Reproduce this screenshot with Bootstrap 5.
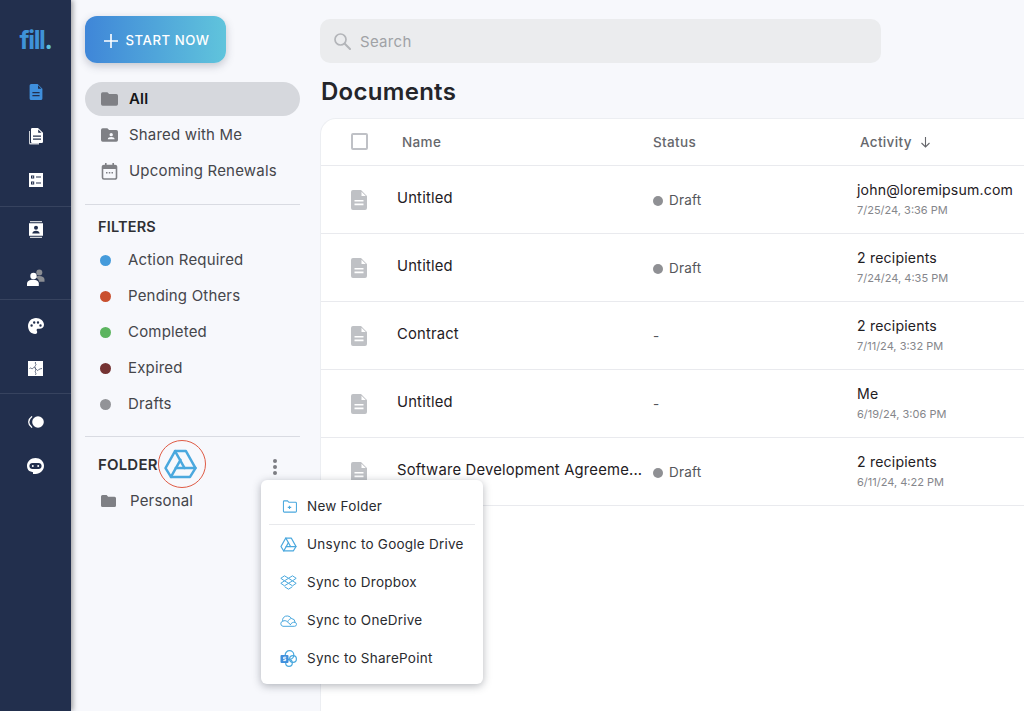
<!doctype html>
<html lang="en">
<head>
<meta charset="utf-8">
<title>Documents</title>
<link rel="stylesheet" href="https://cdn.jsdelivr.net/npm/bootstrap@5.3.0/dist/css/bootstrap.min.css">
<style>
html,body{height:711px;overflow:hidden}
body{font-family:"Inter","Liberation Sans",sans-serif;font-size:15px;background:#f7f8fc;color:#3a3b3f;letter-spacing:.012em}
.shell{height:711px}
.rail{width:71px;flex:none;background:#222f4d;box-shadow:2px 0 5px rgba(0,0,0,.35);z-index:3;padding-top:26px}
.rail-logo{height:28px;line-height:28px;font-size:25px;font-weight:700;color:#3f93d8;text-align:center;letter-spacing:-.055em;margin-bottom:16px}
.rail-group{border-bottom:1px solid #37435f}
.rail-group.one{padding-bottom:4px}
.rail-group.three{padding-top:4px;padding-bottom:3px}
.rail-group.three .rail-btn{height:43px}
.rail-group.last{border:0;padding-top:6px}
.rail-btn{height:44px;display:flex;align-items:center;justify-content:center}
.panel{width:249px;flex:none;padding:16px 20px 0 14px;position:relative}
.start-btn{width:141px;height:47px;border-radius:12px;border:0;background:linear-gradient(90deg,#3f86d8,#60c4dc);color:#fff;font-size:13.2px;font-weight:500;letter-spacing:.04em;box-shadow:0 3px 9px rgba(60,70,90,.28);margin-bottom:19px;padding:2px 0 0 2px}
.side-row{height:36px;padding-left:16px;display:flex;align-items:center;color:#45464b;gap:11px}
.side-row svg{flex:none}
.side-row.on{height:34px;margin-bottom:1px;background:#d6d8dd;border-radius:17px;font-weight:600;color:#141518}
.side-rule{border-top:1px solid #d9dbe2;margin:0;opacity:1}
.side-title{font-weight:600;color:#2f3034;font-size:14.5px;padding-left:13px}
.dot-mark{width:11px;height:11px;border-radius:50%;flex:none;display:block}
.filter-row{padding-left:15px;gap:17px}
.folder-head{height:56px;position:relative;display:flex;align-items:center}
.folder-head .side-title{font-size:15px}
.drive-ring{position:absolute;left:73px;top:3px;width:48px;height:48px;border:1px solid #df5b45;border-radius:50%;display:flex;align-items:center;justify-content:center;padding-right:3px}
.kebab{position:absolute;left:188px;top:22px;width:5px;display:flex;flex-direction:column;gap:2px}
.kebab i{display:block;width:4px;height:4px;border-radius:50%;background:#7d7e83}
.menu-box{position:absolute;left:190px;top:480px;width:222px;height:204px;padding:7px 0 0;border:0;border-radius:6px;background:#fff;box-shadow:0 2px 8px rgba(40,45,60,.35);z-index:5;display:block;--bs-dropdown-min-width:0}
.menu-box .dropdown-item{height:38px;display:flex;align-items:center;gap:10px;padding:0 0 0 19px;font-size:13.5px;color:#2a2b2f;letter-spacing:.018em}
.menu-box .dropdown-divider{margin:0 8px 0;border-color:#e8e9ec;height:0}
.menu-box .top-item{height:37px;padding-top:1px}
.work{flex:1;min-width:0;overflow:hidden}
.search-box{margin:19px 0 0;width:561px;height:44px;background:#ebecee;border-radius:10px;display:flex;align-items:center;gap:9px;padding-left:14px;color:#a0a2a6;font-size:15px}
.search-word{padding-top:2px;letter-spacing:.02em}
.page-title{font-size:24px;font-weight:600;color:#24252a;line-height:28px;margin:15px 0 12px 1px;letter-spacing:.012em}
.doc-card{background:#fff;border-top:1px solid #eceef2;border-left:1px solid #eceef2;border-top-left-radius:16px;height:600px;width:760px}
.doc-table{table-layout:fixed;width:759px;margin:0;--bs-table-bg:transparent;border-collapse:collapse}
.doc-table td,.doc-table th{padding:0;vertical-align:middle;border-bottom:1px solid #e9eaee;white-space:nowrap}
.doc-table th{height:46px;font-size:13.5px;font-weight:500;color:#66676c;letter-spacing:.025em}
.doc-table td{height:68px;color:#1f2024;font-size:14.8px}
.doc-table .col-check{padding-left:30px}
.doc-table .col-name{padding-left:5px}
.doc-table .col-act{padding-left:3px}
.doc-table .name-cell{padding-bottom:2px}
.check-box{width:17px;height:17px;border:2px solid #bfc1c6;border-radius:2px;display:block}
.cell-icon{display:block;position:relative;top:1px}
.status-cell{display:flex;align-items:center;gap:6px;font-size:13.5px;color:#55565b;padding-top:3px}
.status-cell .dot-mark{width:10px;height:10px;background:#8f9094}
.who{font-size:14.1px;line-height:17px;color:#1f2024;margin-bottom:5px;margin-top:-1px}
.when{font-size:11px;line-height:14px;color:#85868b;letter-spacing:0}
</style>
</head>
<body>
<svg width="0" height="0" class="position-absolute">
  <symbol id="doc" viewBox="0 0 16 20"><path fill="currentColor" fill-rule="evenodd" d="M2 0h8l6 6v12a2 2 0 0 1-2 2H2a2 2 0 0 1-2-2V2a2 2 0 0 1 2-2zm8.500 1.700V6h4.300zM3.500 10v1.600h9V10zm0 3.600v1.600h9v-1.600z"/></symbol>
  <symbol id="folder" viewBox="0 0 20 16"><path fill="currentColor" d="M2 0h5.500l2 2.200H18a2 2 0 0 1 2 2V14a2 2 0 0 1-2 2H2a2 2 0 0 1-2-2V2a2 2 0 0 1 2-2z"/></symbol>
  <symbol id="drive" viewBox="0 0 24 22"><g fill="none" stroke="currentColor" stroke-width="1.800" stroke-linejoin="round" stroke-linecap="round"><path d="M8 1.500h8L23 14l-4 6.500H5L1 14z"/><path d="M8 1.500 15 14h8"/><path d="M5 20.500 12 8"/><path d="M8.500 14H15"/></g></symbol>
</svg>
<div class="shell d-flex">
  <nav class="rail">
    <div class="rail-logo">fill<span style="color:#5cc0de">.</span></div>
    <div class="rail-group one">
      <div class="rail-btn"><svg width="14" height="16" style="color:#3f8fdc"><use href="#doc"/></svg></div>
      <div class="rail-btn"><svg width="16" height="17" viewBox="0 0 16 17"><path fill="#cfd2d8" d="M1 3h1v12h9v1.400H2.200A1.200 1.200 0 0 1 1 15.200z"/><path fill="#fff" fill-rule="evenodd" d="M4.200 0H10l5 4.800v9a1.200 1.200 0 0 1-1.200 1.200H4.200A1.200 1.200 0 0 1 3 13.800V1.200A1.200 1.200 0 0 1 4.200 0zm6 1.500v3.200h3.300zM5 7.500v1.200h8V7.500zm0 3v1.200h8v-1.200z"/></svg></div>
      <div class="rail-btn"><svg width="14" height="14" viewBox="0 0 14 14"><path fill="#fff" fill-rule="evenodd" d="M0 0h14v14H0zm2 2.400v3.200h3.200V2.400zm1 1h1.200v1.200H3zM7 3.400v1.200h5V3.400zM2 8.400v3.200h3.200V8.400zm1 1h1.200v1.200H3zm4 0v1.200h5V9.400z"/></svg></div>
    </div>
    <div class="rail-group">
      <div class="rail-btn"><svg width="14" height="17" viewBox="0 0 14 17"><path fill="#cfd2d8" d="M1 0h12v1.300H1zM1 15.700h12V17H1z"/><path fill="#fff" fill-rule="evenodd" d="M0 2.200h14v12.600H0zM7 4.800a2 2 0 1 0 0 4 2 2 0 0 0 0-4zM3.300 12.600h7.400c0-1.700-1.600-2.800-3.700-2.800s-3.700 1.100-3.700 2.800z"/></svg></div>
      <div class="rail-btn mt-1"><svg width="18" height="17" viewBox="0 0 18 17"><circle cx="12.300" cy="3.600" r="3" fill="#8a8d93"/><path fill="#8a8d93" d="M8 8.200c1-1 2.800-1.300 4.300-1.300 3 0 5.200 1.400 5.200 3.600v2.200H12c0-2-1.400-3.600-4-4.500z"/><circle cx="6.500" cy="7" r="3.200" fill="#fff"/><path fill="#fff" d="M0 17v-2.600c0-2.200 2.700-3.700 6-3.700s5.800 1.500 5.800 3.700V17z"/></svg></div>
    </div>
    <div class="rail-group three">
      <div class="rail-btn"><svg width="16" height="16" viewBox="0 0 16 16"><path fill="#fff" fill-rule="evenodd" d="M8 0c4.500 0 8 3 8 6.800 0 2.700-2.100 3.900-4.400 3.900H10c-.9 0-1.400.6-1.400 1.300 0 .8.6 1 .6 2 0 1.200-.7 2-2 2C3 16 0 12.400 0 8c0-4.400 3.500-8 8-8zM3.600 6.300a1.200 1.200 0 1 0 0 2.400 1.200 1.200 0 0 0 0-2.400zm2.600-3a1.200 1.200 0 1 0 0 2.400 1.200 1.200 0 0 0 0-2.400zm3.800 0a1.200 1.200 0 1 0 0 2.400 1.200 1.200 0 0 0 0-2.400zm2.500 3a1.200 1.200 0 1 0 0 2.400 1.200 1.200 0 0 0 0-2.400z"/></svg></div>
      <div class="rail-btn"><svg width="15" height="15" viewBox="0 0 15 15"><rect width="15" height="15" fill="#fff"/><path fill="none" stroke="#3d4964" stroke-width=".8" d="M1.500 7.500c1.500-1.500 2 1 3.200 0s1-1.800 2.800 0c1.500 1.500 2 2.800 3 1.500s1.500-1 3.500-1.500M7.500 1c-1 2 1.500 2 0 3.500s0 1.500 0 3M7.500 7.500c1 2-1 2.500 0 4s0 1.500 0 2.500"/></svg></div>
    </div>
    <div class="rail-group last">
      <div class="rail-btn"><svg width="16" height="12" viewBox="0 0 16 12"><circle cx="10" cy="6" r="5.800" fill="#fff"/><path fill="none" stroke="#fff" stroke-width="1.300" stroke-linecap="round" d="M3.700 .8C1.800 2.200.7 4 .7 6s1.100 3.800 3 5.200"/></svg></div>
      <div class="rail-btn"><svg width="17" height="16" viewBox="0 0 17 16"><path fill="#fff" fill-rule="evenodd" d="M8.500 0c4.700 0 8.500 3.400 8.500 7.800 0 4.500-3.700 8.200-8.500 8.200H6v-1.800l-3.800-1.100C.8 11.700 0 9.900 0 7.800 0 3.400 3.800 0 8.500 0zM5.500 5C3.700 5 2.400 6.200 2.400 8s1.300 3 3.100 3h6c1.800 0 3.100-1.200 3.100-3s-1.300-3-3.100-3zm.3 2.100a1 1 0 1 1 0 2 1 1 0 0 1 0-2zm5.400 0a1 1 0 1 1 0 2 1 1 0 0 1 0-2z"/></svg></div>
    </div>
  </nav>

  <aside class="panel">
    <button class="start-btn d-flex align-items-center justify-content-center gap-2" type="button"><svg width="14" height="14" viewBox="0 0 14 14"><path stroke="#fff" stroke-width="1.600" d="M7 0v14M0 7h14"/></svg>START NOW</button>
    <div class="side-row on"><svg width="17" height="14" style="color:#7f8085"><use href="#folder"/></svg><span>All</span></div>
    <div class="side-row"><svg width="17" height="14" viewBox="0 0 20 16"><path fill="#7f8085" fill-rule="evenodd" d="M2 0h5.500l2 2.200H18a2 2 0 0 1 2 2V14a2 2 0 0 1-2 2H2a2 2 0 0 1-2-2V2a2 2 0 0 1 2-2zm10 5.600a2 2 0 1 0 0 4 2 2 0 0 0 0-4zM8 13h8c0-1.800-1.800-2.700-4-2.700S8 11.200 8 13z"/></svg><span>Shared with Me</span></div>
    <div class="side-row"><svg width="17" height="17" viewBox="0 0 17 17"><path fill="none" stroke="#7f8085" stroke-width="1.600" d="M3 2.500h11a1.500 1.500 0 0 1 1.500 1.500v10.500A1.500 1.500 0 0 1 14 16H3a1.500 1.500 0 0 1-1.500-1.500V4A1.500 1.500 0 0 1 3 2.500z"/><path fill="#7f8085" d="M2 3h13v3H2zM4 0h1.600v3H4zM11.400 0H13v3h-1.600zM5 9h1.500v1.500H5zM7.800 9h1.500v1.500H7.800zM10.500 9H12v1.500h-1.500z"/></svg><span>Upcoming Renewals</span></div>
    <hr class="side-rule" style="margin-top:15px">
    <div class="side-title" style="margin-top:13px;margin-bottom:6px;line-height:18px">FILTERS</div>
    <div class="side-row filter-row"><span class="dot-mark" style="background:#459bdb"></span>Action Required</div>
    <div class="side-row filter-row"><span class="dot-mark" style="background:#c9502f"></span>Pending Others</div>
    <div class="side-row filter-row"><span class="dot-mark" style="background:#5cb45f"></span>Completed</div>
    <div class="side-row filter-row"><span class="dot-mark" style="background:#753333"></span>Expired</div>
    <div class="side-row filter-row"><span class="dot-mark" style="background:#929397"></span>Drafts</div>
    <hr class="side-rule" style="margin-top:14px">
    <div class="folder-head">
      <div class="side-title">FOLDER</div>
      <div class="drive-ring"><svg width="33" height="30" style="color:#4aa8de"><use href="#drive"/></svg></div>
      <div class="kebab"><i></i><i></i><i></i></div>
    </div>
    <div class="side-row" style="gap:14px;height:18px;margin-top:-1px"><svg width="15" height="12" style="color:#7f8085"><use href="#folder"/></svg>Personal</div>

    <div class="dropdown-menu menu-box">
      <a class="dropdown-item top-item" href="#"><svg width="15" height="13" viewBox="0 0 17 15" style="margin-left:2px"><path fill="none" stroke="#4aa8de" stroke-width="1.200" d="M1.500 1h4.700l1.600 1.700h7.700a1 1 0 0 1 1 1V13a1 1 0 0 1-1 1h-13a1 1 0 0 1-1-1V2a1 1 0 0 1 1-1zM8.500 6.500v4M6.500 8.500h4"/></svg>New Folder</a>
      <hr class="dropdown-divider">
      <a class="dropdown-item" href="#"><svg width="17" height="15" style="color:#4aa8de"><use href="#drive"/></svg>Unsync to Google Drive</a>
      <a class="dropdown-item" href="#"><svg width="17" height="15" viewBox="0 0 17 15"><path fill="none" stroke="#4aa8de" stroke-width="1" stroke-linejoin="round" d="M4.500 .8 8.500 3.300 4.500 5.800 .8 3.300zM12.500 .8 16.200 3.300 12.500 5.800 8.500 3.300zM4.500 5.800 8.500 8.300 4.500 10.800 .8 8.300zM12.500 5.800 16.200 8.300 12.500 10.800 8.500 8.300zM4.700 11.800 8.500 14.200 12.300 11.800"/></svg>Sync to Dropbox</a>
      <a class="dropdown-item" href="#"><svg width="18" height="13" viewBox="0 0 18 13" style="margin-left:-1px"><path fill="none" stroke="#4aa8de" stroke-width="1" stroke-linejoin="round" d="M4 12.300h11.500a2 2 0 0 0 .6-3.900A4 4 0 0 0 12.500 4.500 5 5 0 0 0 4.500 3.500 3.800 3.800 0 0 0 3.800 7.200 2.600 2.600 0 0 0 4 12.300zM3.800 7.200C5.500 6.300 7 6.600 8 7.500l4 3.500M12.500 4.500C11 4.600 9.500 5.800 8.700 7.800M16.100 8.400C14 7.800 12.300 9 11 11"/></svg>Sync to OneDrive</a>
      <a class="dropdown-item" href="#"><svg width="17" height="17" viewBox="0 0 17 17"><circle cx="9.500" cy="5" r="4.300" fill="none" stroke="#4aa8de" stroke-width="1.200"/><circle cx="13" cy="9" r="3.400" fill="none" stroke="#4aa8de" stroke-width="1.200"/><circle cx="9" cy="13" r="3.300" fill="none" stroke="#4aa8de" stroke-width="1.200"/><rect x=".5" y="5" width="8" height="8" rx="1" fill="#3f8fdc"/><path fill="none" stroke="#fff" stroke-width="1" d="M6.200 7.200H3.700v1.700h2v1.700H3.300"/></svg>Sync to SharePoint</a>
    </div>
  </aside>

  <main class="work">
    <div class="search-box"><svg width="17" height="17" viewBox="0 0 17 17"><circle cx="6.500" cy="6.500" r="5.500" fill="none" stroke="#b3b5b9" stroke-width="1.700"/><path stroke="#b3b5b9" stroke-width="2" stroke-linecap="round" d="M10.800 10.800 16 16"/></svg><span class="search-word">Search</span></div>
    <h1 class="page-title">Documents</h1>
    <div class="doc-card">
      <table class="table doc-table">
        <colgroup><col style="width:76px"><col style="width:256px"><col style="width:204px"><col style="width:223px"></colgroup>
        <thead><tr>
          <th class="col-check"><span class="check-box"></span></th>
          <th class="col-name">Name</th>
          <th>Status</th>
          <th class="col-act">Activity <svg width="11" height="11" viewBox="0 0 11 11" class="ms-1"><path fill="none" stroke="#66676c" stroke-width="1.100" d="M5.500 0v10M1.500 6l4 4 4-4"/></svg></th>
        </tr></thead>
        <tbody>
          <tr><td class="col-check"><svg class="cell-icon" width="16" height="20" style="color:#bfc1c5"><use href="#doc"/></svg></td><td class="name-cell">Untitled</td><td><div class="status-cell"><span class="dot-mark"></span>Draft</div></td><td><div class="who">john@loremipsum.com</div><div class="when">7/25/24, 3:36 PM</div></td></tr>
          <tr><td class="col-check"><svg class="cell-icon" width="16" height="20" style="color:#bfc1c5"><use href="#doc"/></svg></td><td class="name-cell">Untitled</td><td><div class="status-cell"><span class="dot-mark"></span>Draft</div></td><td><div class="who">2 recipients</div><div class="when">7/24/24, 4:35 PM</div></td></tr>
          <tr><td class="col-check"><svg class="cell-icon" width="16" height="20" style="color:#bfc1c5"><use href="#doc"/></svg></td><td class="name-cell">Contract</td><td><div class="status-cell">-</div></td><td><div class="who">2 recipients</div><div class="when">7/11/24, 3:32 PM</div></td></tr>
          <tr><td class="col-check"><svg class="cell-icon" width="16" height="20" style="color:#bfc1c5"><use href="#doc"/></svg></td><td class="name-cell">Untitled</td><td><div class="status-cell">-</div></td><td><div class="who">Me</div><div class="when">6/19/24, 3:06 PM</div></td></tr>
          <tr><td class="col-check"><svg class="cell-icon" width="16" height="20" style="color:#bfc1c5"><use href="#doc"/></svg></td><td class="name-cell">Software Development Agreeme...</td><td><div class="status-cell"><span class="dot-mark"></span>Draft</div></td><td><div class="who">2 recipients</div><div class="when">6/11/24, 4:22 PM</div></td></tr>
        </tbody>
      </table>
    </div>
  </main>
</div>
<script src="https://cdn.jsdelivr.net/npm/bootstrap@5.3.0/dist/js/bootstrap.bundle.min.js"></script>
</body>
</html>
